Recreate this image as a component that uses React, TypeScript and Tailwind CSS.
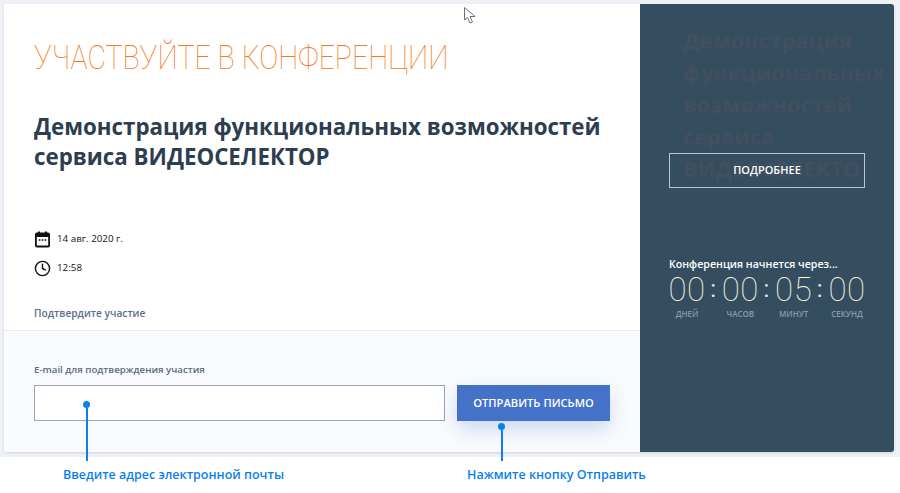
import { Clock } from 'lucide-react';

const units = [
  { value: '00', label: 'ДНЕЙ' },
  { value: '00', label: 'ЧАСОВ' },
  { value: '05', label: 'МИНУТ' },
  { value: '00', label: 'СЕКУНД' },
];

function Pointer({ className }: { className: string }) {
  return (
    <div className={`absolute flex w-[7px] flex-col items-center ${className}`}>
      <div className="h-[7px] w-[7px] shrink-0 rounded-full bg-[#0a7ff0]" />
      <div className="w-[2px] grow bg-[#0a7ff0]" />
    </div>
  );
}

function CalendarIcon() {
  return (
    <svg width="17" height="17" viewBox="0 0 17 17" className="shrink-0">
      <rect x="4" y="0.5" width="2" height="3" fill="#111" />
      <rect x="11" y="0.5" width="2" height="3" fill="#111" />
      <rect x="1.9" y="2.5" width="13.2" height="13" rx="1" fill="none" stroke="#111" strokeWidth="1.8" />
      <rect x="1.9" y="2.5" width="13.2" height="3.5" fill="#111" />
      <rect x="4.8" y="8.2" width="1.6" height="1.6" fill="#111" />
      <rect x="7.7" y="8.2" width="1.6" height="1.6" fill="#111" />
      <rect x="10.6" y="8.2" width="1.6" height="1.6" fill="#111" />
    </svg>
  );
}

export default function App() {
  return (
    <div className="relative h-[493px] w-[900px] overflow-hidden bg-white font-['Open_Sans','Noto_Sans',sans-serif]">
      <div className="h-[457px] bg-[#eef2f7] pb-[5px] pl-1 pr-[6px] pt-1">
        <div className="flex h-full overflow-hidden rounded-[3px] shadow-sm">
          {/* Left */}
          <div className="flex w-[636px] flex-col bg-white">
            <div className="flex h-[326px] flex-col px-[30px]">
              <h2 className="mt-[34px] origin-left scale-x-[0.877] font-['Roboto',sans-serif] text-[32.5px] leading-[40px] font-thin whitespace-nowrap text-[#f47a20]">
                УЧАСТВУЙТЕ В КОНФЕРЕНЦИИ
              </h2>
              <h1 className="mt-[34px] text-[22.3px] leading-[30px] font-bold whitespace-nowrap text-[#2c3e50]">
                Демонстрация функциональных возможностей
                <br />
                сервиса ВИДЕОСЕЛЕКТОР
              </h1>
              <div className="mt-[57px] flex h-[20px] items-center gap-[6px] text-[9.8px] font-medium text-[#111]">
                <CalendarIcon />
                <span>14 авг. 2020 г.</span>
              </div>
              <div className="mt-[9px] flex h-[20px] items-center gap-[6px] text-[9.8px] font-medium text-[#111]">
                <Clock size={17} strokeWidth={2} className="shrink-0 text-[#111]" />
                <span>12:58</span>
              </div>
              <p className="mt-[27px] text-[10.2px] leading-[16px] font-semibold text-[#5a6f8c]">Подтвердите участие</p>
            </div>
            <div className="grow border-t border-[#e8ecf2] bg-[#fafbfe] px-[30px]">
              <p className="mt-[32px] text-[9.7px] leading-[14px] font-semibold text-[#5c6a80]">
                E-mail для подтверждения участия
              </p>
              <div className="mt-[8px] flex gap-[12px]">
                <div className="h-[36px] w-[411px] border border-[#9aa5b5] bg-white" />
                <button className="h-[36px] w-[153px] bg-[#4472c9] text-[11.2px] font-semibold text-white shadow-[0_8px_20px_rgba(68,114,201,0.25)]">
                  ОТПРАВИТЬ ПИСЬМО
                </button>
              </div>
            </div>
          </div>

          {/* Right */}
          <div className="relative flex grow flex-col overflow-hidden bg-[#344e5f] px-[29px] text-white">
            <p className="absolute left-[43px] top-[21px] w-[210px] text-[21.7px] leading-[32px] font-bold text-[#434f60]">
              Демонстрация функциональных возможностей сервиса ВИДЕОСЕЛЕКТО
            </p>
            <div className="relative mt-[149px] flex h-[35px] w-[196px] items-center justify-center border border-[#b9c6cf] text-[11px] font-semibold">
              ПОДРОБНЕЕ
            </div>
            <p className="relative mt-[68px] text-[10.6px] leading-[16px] font-semibold whitespace-nowrap">
              Конференция начнется через...
            </p>
            <div className="mt-[1px] flex w-[196px] justify-between">
              {units.map((u, i) => (
                <div key={i} className="relative flex w-[36px] flex-col items-center">
                  <span className="font-['Roboto',sans-serif] text-[33px] leading-[34px] font-thin tracking-[0.5px] text-[#fdf6e3]">
                    {u.value}
                  </span>
                  <span className="mt-[1px] text-[8px] leading-[12px] font-semibold whitespace-nowrap text-[#8b9aa8]">
                    {u.label}
                  </span>
                  {i < 3 && (
                    <span className="absolute -right-[11px] top-[1px] font-['Roboto',sans-serif] text-[24px] leading-[30px] font-normal text-[#e6ebee]">
                      :
                    </span>
                  )}
                </div>
              ))}
            </div>
          </div>
        </div>
      </div>

      {/* Annotations */}
      <Pointer className="left-[83px] top-[401px] h-[60px]" />
      <Pointer className="left-[498px] top-[423px] h-[38px]" />
      <div className="flex h-[36px] items-center text-[12.5px] font-semibold text-[#0a7ff0]">
        <span className="ml-[63px] w-[404px]">Введите адрес электронной почты</span>
        <span>Нажмите кнопку Отправить</span>
      </div>

      {/* Mouse cursor from the capture */}
      <svg className="absolute left-[464px] top-[7px]" width="13" height="17" viewBox="0 0 13 17">
        <path d="M0.5 0.5V13L3.5 10.5L6 16L8.5 15L6 9.5H11Z" fill="#fff" stroke="#6b7078" strokeWidth="1" />
      </svg>
    </div>
  );
}
